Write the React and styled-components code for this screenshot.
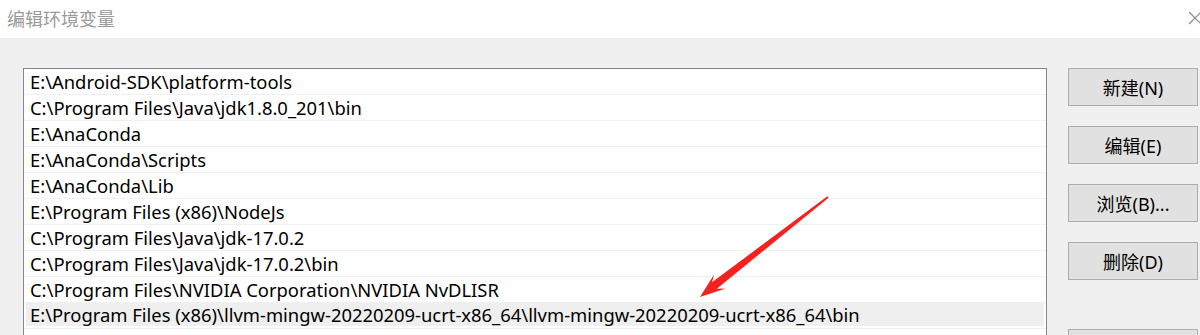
import React from "react";
import styled, { createGlobalStyle } from "styled-components";

const GlobalStyle = createGlobalStyle`
  html, body {
    margin: 0;
    padding: 0;
    background: #f0f0f0;
  }
  body {
    font-family: "Noto Sans", "Noto Sans CJK SC", sans-serif;
  }
`;

const Window = styled.div`
  position: relative;
  width: 1200px;
  height: 335px;
  overflow: hidden;
  display: flex;
  flex-direction: column;
  background: #f0f0f0;
`;

const TitleBar = styled.div`
  height: 38px;
  flex: none;
  background: #ffffff;
  display: flex;
  align-items: center;
  justify-content: space-between;
  padding-left: 7px;
`;

const Title = styled.span`
  font-family: "Noto Sans CJK SC", sans-serif;
  font-size: 18px;
  color: #9a9a9a;
  margin-top: -2px;
`;

const Close = styled.svg`
  width: 14px;
  height: 14px;
  margin-right: -2px;
  margin-top: -3px;
`;

const Body = styled.div`
  flex: 1;
  display: flex;
  align-items: flex-start;
  padding: 30px 0 0 23px;
`;

const ListBox = styled.div`
  width: 1022px;
  height: 400px;
  flex: none;
  background: #ffffff;
  border: 1px solid #828790;
`;

const Row = styled.div`
  height: 26px;
  box-sizing: border-box;
  border-bottom: 1px solid #f0f0f0;
  padding: 0 2px;
  display: flex;
`;

const Cell = styled.div`
  flex: 1;
  height: ${(p) => (p.$selected ? "23px" : "25px")};
  padding-left: 4px;
  display: flex;
  align-items: center;
  background: ${(p) => (p.$selected ? "#efefef" : "transparent")};
  font-size: 18.4px;
  color: #000000;
  white-space: nowrap;
  overflow: hidden;
`;

const Buttons = styled.div`
  display: flex;
  flex-direction: column;
  gap: 20px;
  margin-left: 21px;
`;

const Button = styled.button`
  width: 130px;
  height: 38px;
  margin-top: ${(p) => p.$gapBefore || 0}px;
  background: #e1e1e1;
  border: 1px solid #adadad;
  border-radius: 0;
  font-family: "Noto Sans", "Noto Sans CJK SC", sans-serif;
  font-size: 18px;
  color: #000000;
  padding: 0;
`;

const Arrow = styled.svg`
  position: absolute;
  left: 0;
  top: 0;
  width: 1200px;
  height: 335px;
  pointer-events: none;
`;

const paths = [
  "E:\\Android-SDK\\platform-tools",
  "C:\\Program Files\\Java\\jdk1.8.0_201\\bin",
  "E:\\AnaConda",
  "E:\\AnaConda\\Scripts",
  "E:\\AnaConda\\Lib",
  "E:\\Program Files (x86)\\NodeJs",
  "C:\\Program Files\\Java\\jdk-17.0.2",
  "C:\\Program Files\\Java\\jdk-17.0.2\\bin",
  "C:\\Program Files\\NVIDIA Corporation\\NVIDIA NvDLISR",
  "E:\\Program Files (x86)\\llvm-mingw-20220209-ucrt-x86_64\\llvm-mingw-20220209-ucrt-x86_64\\bin",
];

const buttons = [
  { label: "新建(N)" },
  { label: "编辑(E)" },
  { label: "浏览(B)..." },
  { label: "删除(D)" },
  { label: "", gap: 29 },
];

export default function App() {
  return (
    <Window>
      <GlobalStyle />
      <TitleBar>
        <Title>编辑环境变量</Title>
        <Close viewBox="0 0 14 14">
          <path d="M1 1 L13 13 M13 1 L1 13" stroke="#8a8a8a" strokeWidth="1.2" fill="none" />
        </Close>
      </TitleBar>
      <Body>
        <ListBox>
          {paths.map((p, i) => (
            <Row key={i}>
              <Cell $selected={i === paths.length - 1}>{p}</Cell>
            </Row>
          ))}
        </ListBox>
        <Buttons>
          {buttons.map((b, i) => (
            <Button key={i} $gapBefore={b.gap}>
              {b.label}
            </Button>
          ))}
        </Buttons>
      </Body>
      <Arrow viewBox="0 0 1200 335">
        <polygon
          points="828.6,197.8 716.8,288.7 725.6,288.5 700,297 714.2,274.2 712,282.3 827.4,196.2"
          fill="#f5211e"
        />
      </Arrow>
    </Window>
  );
}
